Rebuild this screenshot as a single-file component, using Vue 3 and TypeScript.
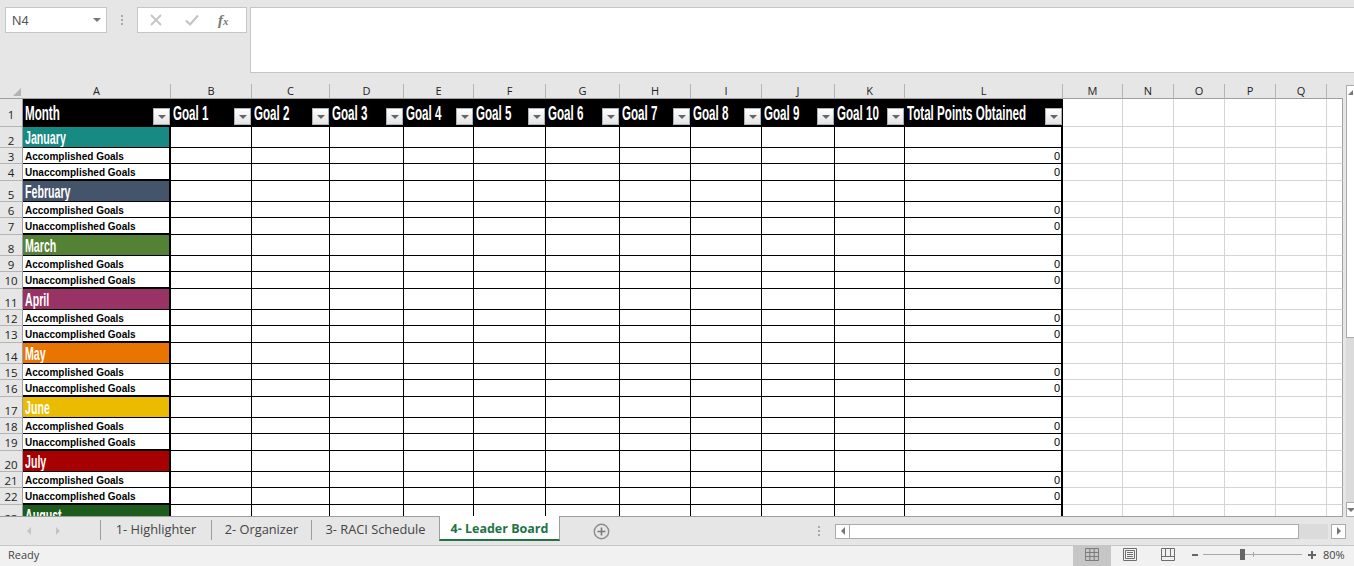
<script setup lang="ts">
type Cell = { key: string; text?: string; cls: string[]; filter?: boolean; color?: string };

const colNames = ['A', 'B', 'C', 'D', 'E', 'F', 'G', 'H', 'I', 'J', 'K', 'L', 'M', 'N', 'O', 'P', 'Q', 'R'];
const colWidths = [148, 81, 78, 74, 70, 72, 74, 71, 71, 73, 70, 158, 60, 51, 51, 51, 51, 16];
const gridCols = `23px ${colWidths.map((w) => `${w}px`).join(' ')}`;

const months = [
  ['January', '#178a84'],
  ['February', '#44546a'],
  ['March', '#548235'],
  ['April', '#993366'],
  ['May', '#e97500'],
  ['June', '#eabb00'],
  ['July', '#a60000'],
  ['August', '#1e5c1e'],
];

const headers = ['Month', 'Goal 1', 'Goal 2', 'Goal 3', 'Goal 4', 'Goal 5', 'Goal 6', 'Goal 7', 'Goal 8', 'Goal 9', 'Goal 10', 'Total Points Obtained'];

const rowHeights: number[] = [28];
const cells: Cell[] = [];

function outerCells(row: number, start: number) {
  for (let c = start; c < colNames.length; c++) {
    cells.push({ key: `${row}-${c}`, cls: ['out', c === colNames.length - 1 ? 'out-end' : ''] });
  }
}

// header row
cells.push({ key: 'r1', text: '1', cls: ['rowhead', 'top'] });
headers.forEach((text, c) => {
  cells.push({ key: `h-${c}`, text, cls: ['head'], filter: true });
});
outerCells(1, 12);

// month blocks: a coloured row and two goal rows
let row = 2;
months.forEach(([name, color], m) => {
  rowHeights.push(21);
  cells.push({ key: `r${row}`, text: String(row), cls: ['rowhead', 'low'] });
  cells.push({ key: `m-${m}`, text: name, cls: ['month'], color });
  for (let c = 1; c < 12; c++) {
    cells.push({ key: `${row}-${c}`, cls: ['in', c === 11 ? 'edge' : ''] });
  }
  outerCells(row, 12);
  row++;
  // the last month is cut off by the tab bar
  if (m === months.length - 1) return;
  ['Accomplished Goals', 'Unaccomplished Goals'].forEach((label, i) => {
    rowHeights.push(i === 0 ? 16 : 17);
    cells.push({ key: `r${row}`, text: String(row), cls: ['rowhead'] });
    cells.push({ key: `l-${row}`, text: label, cls: ['label', i === 1 ? 'label-end' : ''] });
    for (let c = 1; c < 12; c++) {
      const last = c === 11;
      cells.push({ key: `${row}-${c}`, text: last ? '0' : undefined, cls: ['in', last ? 'edge' : '', last ? 'num' : ''] });
    }
    outerCells(row, 12);
    row++;
  });
});

const gridRows = rowHeights.map((h) => `${h}px`).join(' ');
const tabs = [
  { name: '1- Highlighter', width: 111 },
  { name: '2- Organizer', width: 100 },
  { name: '3- RACI Schedule', width: 128 },
];
</script>

<template>
  <div class="app">
    <div class="formula">
      <div class="namebox">
        <span>N4</span>
        <i class="caret" />
      </div>
      <div class="dots"><b /><b /><b /></div>
      <div class="fbtns">
        <svg width="14" height="14" viewBox="0 0 14 14"><path d="M2 2l10 10M12 2L2 12" stroke="#c4c4c4" stroke-width="1.8" fill="none" /></svg>
        <svg width="14" height="14" viewBox="0 0 14 14"><path d="M1 7.5l4 4 8-9" stroke="#c4c4c4" stroke-width="2.2" fill="none" /></svg>
        <span class="fx">f<small>x</small></span>
      </div>
      <div class="finput" />
    </div>

    <div class="colbar">
      <div class="corner"><i /></div>
      <div
        v-for="(name, i) in colNames"
        :key="name"
        class="colhead"
        :class="{ 'col-end': i === 17 }"
        :style="{ width: colWidths[i] + 'px' }"
      >
        {{ i < 17 ? name : '' }}
      </div>
      <div class="sb-gap" />
      <div class="sb-btn up"><i class="tri-up" /></div>
    </div>

    <div class="middle">
      <div class="sheet" :style="{ gridTemplateColumns: gridCols, gridTemplateRows: gridRows }">
        <div
          v-for="cell in cells"
          :key="cell.key"
          class="cell"
          :class="cell.cls"
          :style="cell.color ? { background: cell.color } : undefined"
        >
          <span v-if="cell.text">{{ cell.text }}</span>
          <i v-if="cell.filter" class="filter" />
        </div>
      </div>
      <div class="vscroll">
        <div class="vthumb" />
        <div class="vtrack" />
        <div class="sb-btn down"><i class="tri-down" /></div>
      </div>
    </div>

    <div class="tabbar">
      <div class="tabnav">
        <i class="tri-left" />
        <i class="tri-right" />
      </div>
      <div v-for="t in tabs" :key="t.name" class="tab" :style="{ width: t.width + 'px' }">{{ t.name }}</div>
      <div class="tab active">4- Leader Board</div>
      <div class="addtab">
        <svg width="17" height="17" viewBox="0 0 17 17"><circle cx="8.5" cy="8.5" r="7.2" fill="none" stroke="#8c8c8c" stroke-width="1.4" /><path d="M8.5 4.5v8M4.5 8.5h8" stroke="#7a7a7a" stroke-width="1.6" /></svg>
      </div>
      <div class="dots tabdots"><b /><b /><b /></div>
      <div class="hscroll">
        <div class="hbtn"><i class="tri-left dark" /></div>
        <div class="hthumb" />
        <div class="htrack" />
        <div class="hbtn"><i class="tri-right dark" /></div>
      </div>
    </div>

    <div class="status">
      <span class="ready">Ready</span>
      <div class="views">
        <div class="view on">
          <svg width="14" height="13" viewBox="0 0 14 13"><path d="M.5.5h13v12H.5zM.5 4.5h13M.5 8.5h13M4.8.5v12M9.2.5v12" fill="none" stroke="#7c7c7c" /></svg>
        </div>
        <div class="view">
          <svg width="14" height="13" viewBox="0 0 14 13"><path d="M.5.5h13v12H.5zM2.5 2.5h9v8h-9z" fill="none" stroke="#6e6e6e" /><path d="M4 4.5h6M4 6.5h6M4 8.5h6" fill="none" stroke="#6e6e6e" /></svg>
        </div>
        <div class="view">
          <svg width="14" height="13" viewBox="0 0 14 13"><path d="M.5.5h13v12H.5zM.5 8.5h13M4.5.5v8M9.5.5v8" fill="none" stroke="#6e6e6e" /></svg>
        </div>
      </div>
      <div class="zoom">
        <i class="zminus" />
        <div class="zline"><i class="ztick" /><i class="zthumb" /></div>
        <i class="zplus" />
      </div>
      <span class="pct">80%</span>
    </div>
  </div>
</template>

<style>
html, body {
  margin: 0;
  overflow: hidden;
}
</style>

<style scoped>
.app {
  background: #e6e6e6;
  color: #000;
  display: flex;
  flex-direction: column;
  font-family: "Liberation Sans", Arial, sans-serif;
  height: 566px;
  overflow: hidden;
  width: 1354px;
}

/* formula bar */
.formula {
  box-sizing: border-box;
  display: flex;
  height: 84px;
  padding-top: 7px;
}

.namebox {
  align-items: center;
  background: #fff;
  border: 1px solid #c6c6c6;
  box-sizing: border-box;
  color: #555;
  display: flex;
  font-size: 13px;
  height: 26px;
  justify-content: space-between;
  margin-left: 5px;
  padding: 0 5px 0 6px;
  width: 102px;
}

.caret {
  border-left: 4px solid transparent;
  border-right: 4px solid transparent;
  border-top: 4px solid #777;
}

.dots {
  display: flex;
  flex-direction: column;
  gap: 2px;
  height: 26px;
  justify-content: center;
  margin-left: 14px;
  width: 16px;
}

.dots b {
  background: #a8a8a8;
  height: 2px;
  width: 2px;
}

.fbtns {
  align-items: center;
  background: #fff;
  border: 1px solid #c6c6c6;
  box-sizing: border-box;
  display: flex;
  gap: 22px;
  height: 26px;
  padding-left: 11px;
  width: 110px;
}

.fx {
  color: #777;
  font-family: "Liberation Serif", serif;
  font-size: 15px;
  font-style: italic;
  font-weight: 700;
  margin-left: -3px;
}

.fx small {
  font-size: 11px;
}

.finput {
  background: #fff;
  border: 1px solid #c6c6c6;
  border-right: 0;
  box-sizing: border-box;
  flex: 1;
  height: 66px;
  margin-left: 3px;
}

/* column headers */
.colbar {
  display: flex;
  height: 15px;
}

.corner {
  border-bottom: 1px solid #9e9e9e;
  box-sizing: border-box;
  flex: none;
  position: relative;
  width: 23px;
}

.corner i {
  border-bottom: 8px solid #b4b4b4;
  border-left: 8px solid transparent;
  bottom: 2px;
  position: absolute;
  right: 2px;
}

.colhead {
  border-bottom: 1px solid #9e9e9e;
  border-right: 1px solid #b4b4b4;
  box-sizing: border-box;
  color: #222;
  flex: none;
  font-family: "Open Sans", sans-serif;
  font-size: 11px;
  line-height: 13px;
  text-align: center;
}

.col-end {
  border-right: 0;
}

.sb-gap {
  width: 3px;
}

.sb-btn {
  align-items: center;
  background: #fff;
  border: 1px solid #ababab;
  border-right: 0;
  box-sizing: border-box;
  display: flex;
  flex: none;
  height: 15px;
  justify-content: center;
  width: 8px;
}

.sb-btn.up {
  margin-top: 1px;
}

.tri-up {
  border-bottom: 5px solid #777;
  border-left: 5px solid transparent;
}

.tri-down {
  border-left: 4px solid transparent;
  border-right: 4px solid transparent;
  border-top: 4px solid #777;
}

/* sheet */
.middle {
  display: flex;
  flex: none;
  height: 418px;
}

.sheet {
  background: #fff;
  border-bottom: 1px solid #9e9e9e;
  box-sizing: border-box;
  display: grid;
  flex: none;
  height: 418px;
  overflow: hidden;
  width: 1343px;
}

.cell {
  border-bottom: 1px solid #d4d4d4;
  border-right: 1px solid #d4d4d4;
  box-sizing: border-box;
  min-width: 0;
  overflow: hidden;
  position: relative;
  white-space: nowrap;
}

.out-end {
  border-right: 1px solid #a0a0a0;
}

.rowhead {
  background: #e6e6e6;
  border-bottom: 1px solid #b4b4b4;
  border-right: 1px solid #9e9e9e;
  color: #222;
  font-family: "Open Sans", sans-serif;
  font-size: 11.5px;
  line-height: 17px;
  text-align: center;
}

.rowhead.top {
  line-height: 31px;
}

.rowhead.low {
  line-height: 27px;
}

.head {
  background: #000;
  border: 0;
  color: #fff;
  font-family: "Liberation Sans Narrow", "Liberation Sans", sans-serif;
  font-size: 20px;
  font-weight: 700;
  line-height: 28px;
  padding-left: 2px;
}

.head span {
  display: inline-block;
  transform: scaleX(0.58);
  transform-origin: left center;
}

.filter {
  background: linear-gradient(#fff, #e4e4e4);
  border: 1px solid #a9b0b8;
  bottom: 2px;
  box-sizing: border-box;
  height: 17px;
  position: absolute;
  right: 1px;
  width: 17px;
}

.filter::after {
  border-left: 4px solid transparent;
  border-right: 4px solid transparent;
  border-top: 4px solid #666;
  content: "";
  left: 4px;
  position: absolute;
  top: 6px;
}

.month {
  border-bottom: 1px solid #000;
  border-right: 2px solid #000;
  color: #fff;
  font-family: "Liberation Sans Narrow", "Liberation Sans", sans-serif;
  font-size: 19px;
  font-weight: 700;
  line-height: 22px;
  padding-left: 2px;
}

.month span {
  display: inline-block;
  transform: scaleX(0.56);
  transform-origin: left center;
}

.label {
  border-bottom: 1px solid #000;
  border-right: 2px solid #000;
  font-size: 10px;
  font-weight: 700;
  line-height: 17px;
  padding-left: 2px;
}

.label-end {
  border-bottom: 2px solid #000;
}

.in {
  background: #fff;
  border-bottom: 1px solid #000;
  border-right: 1px solid #000;
}

.edge {
  border-right: 2px solid #000;
}

.num {
  font-size: 11px;
  line-height: 17px;
  padding-right: 1px;
  text-align: right;
}

/* vertical scrollbar */
.vscroll {
  box-sizing: border-box;
  display: flex;
  flex: 1;
  flex-direction: column;
  margin-left: 3px;
}

.vthumb {
  background: #fff;
  border: 1px solid #ababab;
  border-right: 0;
  border-top: 0;
  box-sizing: border-box;
  height: 239px;
}

.vtrack {
  background: #dbdbdb;
  flex: 1;
}

/* tabs */
.tabbar {
  border-bottom: 1px solid #c6c6c6;
  display: flex;
  flex: none;
  height: 28px;
}

.tabnav {
  align-items: center;
  display: flex;
  gap: 25px;
  padding-left: 27px;
  width: 73px;
}

.tri-left {
  border-bottom: 4px solid transparent;
  border-right: 4px solid #c4c4c4;
  border-top: 4px solid transparent;
}

.tri-right {
  border-bottom: 4px solid transparent;
  border-left: 4px solid #c4c4c4;
  border-top: 4px solid transparent;
}

.tri-left.dark {
  border-right-color: #777;
}

.tri-right.dark {
  border-left-color: #777;
}

.tab {
  align-items: center;
  border-left: 1px solid #9e9e9e;
  box-sizing: border-box;
  color: #444;
  display: flex;
  flex: none;
  font-family: "Open Sans", sans-serif;
  font-size: 12.8px;
  height: 20px;
  justify-content: center;
  margin-top: 3px;
  padding-bottom: 2px;
}

.tab.active {
  background: #fff;
  border-bottom: 2px solid #217346;
  border-right: 1px solid #9e9e9e;
  color: #217346;
  font-size: 12.5px;
  font-weight: 700;
  height: 25px;
  margin-top: -1px;
  padding-bottom: 0;
  padding-top: 2px;
  width: 121px;
}

.addtab {
  align-items: center;
  display: flex;
  margin-left: 33px;
}

.tabdots {
  align-self: center;
  height: auto;
  margin-left: 208px;
  width: 17px;
}

.hscroll {
  align-items: center;
  display: flex;
}

.hbtn {
  align-items: center;
  background: #fff;
  border: 1px solid #ababab;
  box-sizing: border-box;
  display: flex;
  height: 15px;
  justify-content: center;
  width: 15px;
}

.hthumb {
  background: #fff;
  border: 1px solid #ababab;
  border-left: 0;
  box-sizing: border-box;
  height: 15px;
  width: 449px;
}

.htrack {
  background: #dbdbdb;
  height: 15px;
  margin-right: 3px;
  width: 29px;
}

/* status bar */
.status {
  align-items: center;
  background: #f1f1f1;
  color: #444;
  display: flex;
  flex: 1;
  font-family: "Open Sans", sans-serif;
  font-size: 11px;
}

.ready {
  margin-bottom: 3px;
  margin-left: 8px;
  width: 1065px;
}

.views {
  align-self: stretch;
  display: flex;
}

.view {
  align-items: center;
  display: flex;
  justify-content: center;
  padding-bottom: 3px;
  width: 38px;
}

.view.on {
  background: #c6c6c6;
}

.zoom {
  align-items: center;
  display: flex;
  margin-bottom: 3px;
  margin-left: 5px;
}

.zminus {
  background: #666;
  height: 2px;
  width: 6px;
}

.zline {
  background: #a8a8a8;
  height: 1px;
  margin: 0 6px 0 5px;
  position: relative;
  width: 99px;
}

.ztick {
  background: #a8a8a8;
  height: 5px;
  left: 50px;
  position: absolute;
  top: -2px;
  width: 1px;
}

.zthumb {
  background: #666;
  height: 11px;
  left: 37px;
  position: absolute;
  top: -5px;
  width: 5px;
}

.zplus {
  background: linear-gradient(#666, #666) center / 8px 2px no-repeat, linear-gradient(#666, #666) center / 2px 8px no-repeat;
  height: 8px;
  width: 8px;
}

.pct {
  margin-bottom: 3px;
  margin-left: 7px;
}
</style>
